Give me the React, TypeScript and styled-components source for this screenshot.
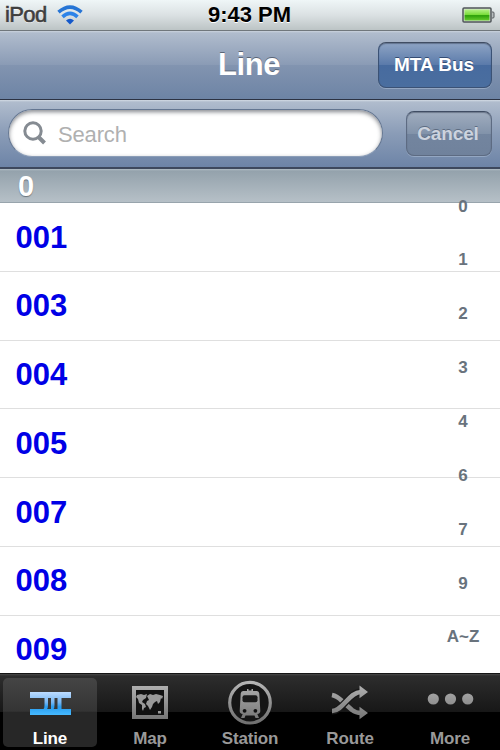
import React from "react";
import styled, { createGlobalStyle } from "styled-components";

const Global = createGlobalStyle`
  * { box-sizing: border-box; }
  body { margin: 0; background: #fff; font-family: "Liberation Sans", Arial, Helvetica, sans-serif; }
`;

const Screen = styled.div`
  width: 500px;
  height: 750px;
  overflow: hidden;
  display: flex;
  flex-direction: column;
  background: #fff;
`;

const StatusBar = styled.header`
  flex: 0 0 31px;
  display: grid;
  grid-template-columns: 1fr auto 1fr;
  align-items: center;
  padding: 0 5px 0 5px;
  background: linear-gradient(#eff6f7, #dbe1e3 50%, #bcc4c5);
  border-bottom: 1px solid #70777c;
`;
const Carrier = styled.div`
  display: flex;
  align-items: center;
  gap: 10px;
  font-size: 22px;
  letter-spacing: -0.6px;
  color: #3e3e3e;
  -webkit-text-stroke: 0.6px #3e3e3e;
  text-shadow: 0 1px 0 #fff;
`;
const Clock = styled.div`
  padding-right: 1px;
  font-size: 22px;
  font-weight: bold;
  color: #000;
  text-shadow: 0 1px 0 #fff;
`;
const BatterySlot = styled.div`
  display: flex;
  justify-content: flex-end;
`;

const NavBar = styled.nav`
  flex: 0 0 69px;
  display: grid;
  grid-template-columns: 1fr auto 1fr;
  align-items: center;
  padding: 0 8px;
  background: linear-gradient(#cbd3dd 0, #b0bccd 2px, #8a9bb5 50%, #8294b0 50%, #6d84a5);
  border-bottom: 1px solid #2c3343;
`;
const Title = styled.h1`
  grid-column: 2;
  margin: 0;
  padding: 0 2px 1px 0;
  font-size: 31px;
  line-height: 36px;
  letter-spacing: -0.4px;
  color: #fff;
  text-shadow: 0 -1px 0 #5a6576;
`;
const BarButton = styled.button<{ $width: number; $muted?: boolean }>`
  justify-self: end;
  width: ${(p) => p.$width}px;
  height: ${(p) => (p.$muted ? 45 : 46)}px;
  padding: ${(p) => (p.$muted ? "1px 2px 0 0" : "0 2px 0 0")};
  border: 1px solid ${(p) => (p.$muted ? "#5d6b82" : "#3b5275")};
  border-top-color: #404d63;
  border-radius: 8px;
  font: bold 19px "Liberation Sans", Arial, sans-serif;
  letter-spacing: ${(p) => (p.$muted ? "-0.15px" : "0")};
  white-space: nowrap;
  color: ${(p) => (p.$muted ? "#ccd3de" : "#fff")};
  text-shadow: 0 -1px 0 ${(p) => (p.$muted ? "#5d6c82" : "#344c73")};
  background: ${(p) =>
    p.$muted
      ? "linear-gradient(#a0adbf, #8293aa 50%, #73859f 50%, #70829c)"
      : "linear-gradient(#8ea4c4, #5a7aaa 50%, #476b9f 50%, #4a6e9f)"};
  box-shadow: 0 1px 0 #94a7c2, inset 0 1px 1px rgba(35, 45, 65, 0.4);
`;

const SearchBar = styled.section`
  flex: 0 0 69px;
  display: flex;
  align-items: center;
  justify-content: space-between;
  padding: 0 8px 1px;
  background: linear-gradient(#d3dbe4 0, #b0bccd 2px, #8a9cb7 50%, #6d84a7);
  border-bottom: 2px solid #3d485d;
`;
const SearchField = styled.label`
  width: 375px;
  height: 48px;
  display: flex;
  align-items: center;
  gap: 11px;
  padding-left: 14px;
  border: 1px solid #647691;
  border-bottom-color: #8b9db7;
  border-radius: 24px;
  background: #fff;
  box-shadow: inset 0 2px 4px rgba(50, 55, 65, 0.6);
`;
const SearchInput = styled.input`
  width: 300px;
  padding: 4px 0 0;
  border: 0;
  outline: 0;
  background: transparent;
  font: 22px "Liberation Sans", Arial, sans-serif;
  letter-spacing: -0.15px;
  &::placeholder { color: #b0b0b0; opacity: 1; }
`;

const ListArea = styled.main`
  flex: 0 0 504px;
  position: relative;
  overflow: hidden;
`;
const SectionHeader = styled.h2`
  height: 34px;
  margin: 0;
  padding-left: 18px;
  font-size: 29px;
  line-height: 34px;
  color: #fff;
  text-shadow: 0 1px 1px #67727a;
  background: linear-gradient(#b2bec6 0, #94a2ac 2px, #b6c0c7);
  border-bottom: 1px solid #98a4ac;
`;
const Lines = styled.ul`
  margin: 0;
  padding: 0;
  list-style: none;
`;
const LineRow = styled.li`
  height: 68.75px;
  padding: 1.5px 0 0 15.5px;
  display: flex;
  align-items: center;
  border-bottom: 1px solid #dfdfdf;
  font-size: 31px;
  font-weight: bold;
  color: #0000e6;
`;
const IndexRail = styled.aside`
  position: absolute;
  top: 10.6px;
  right: 7px;
  width: 60px;
  display: flex;
  flex-direction: column;
  font-size: 17px;
  font-weight: bold;
  text-align: center;
  color: #69737d;
`;
const IndexKey = styled.span`
  height: 53.85px;
  line-height: 54px;
`;

const TabBar = styled.footer`
  flex: 1;
  display: grid;
  grid-template-columns: repeat(5, 100px);
  padding-top: 4px;
  background: linear-gradient(#151515 0, #151515 1px, #484848 1px, #2d2d2d 3px, #171717 39px, #000 39px);
`;
const Tab = styled.a<{ $active?: boolean }>`
  width: 94px;
  height: 69px;
  margin: 1px 0 0 3px;
  border-radius: 5px;
  display: flex;
  flex-direction: column;
  align-items: center;
  background: ${(p) => (p.$active ? "linear-gradient(#454545, #343434 48%, #272727 50%, #272727)" : "transparent")};
  color: ${(p) => (p.$active ? "#fff" : "#999")};
  font-size: 17px;
  font-weight: bold;
`;
const TabIcon = styled.svg`
  width: 50px;
  height: 50px;
  flex: none;
  margin-top: -1px;
`;
const TabLabel = styled.span`
  line-height: 20px;
  padding-top: 2px;
  letter-spacing: -0.15px;
`;

const Wifi = () => (
  <svg width="26" height="20" viewBox="0 0 26 20">
    <g fill="none" stroke="#2775d5" strokeWidth="3.6">
      <path d="M1.5 7.2Q13-3 24.5 7.2" />
      <path d="M5.5 11.8Q13 5 20.5 11.8" stroke="#2d83e8" />
    </g>
    <path d="M9 15.4Q13 12 17 15.4L13 19.4Z" fill="#1458ca" />
  </svg>
);
const Battery = () => (
  <svg width="33" height="17" viewBox="0 0 33 17">
    <defs><linearGradient id="charge" x2="0" y2="1"><stop stopColor="#b5f386" /><stop offset=".48" stopColor="#78dc39" /><stop offset=".55" stopColor="#2da009" /><stop offset="1" stopColor="#65cd2c" /></linearGradient></defs>
    <path d="M30 5h1q1 0 1 1v4q0 1-1 1h-1" fill="#b8bec0" stroke="#565b5e" />
    <rect x="1" y="1" width="28" height="14" rx="1" fill="#d5ddd2" stroke="#50565a" strokeWidth="1.5" />
    <path d="M2.5 2.5h25v11h-25Z" fill="url(#charge)" />
  </svg>
);
const SearchIcon = () => (
  <svg width="24" height="26" viewBox="0 0 24 26" fill="none" stroke="#858b92">
    <circle cx="10" cy="11" r="8.2" strokeWidth="3" /><path d="m15.5 17 6 6" strokeWidth="4" />
  </svg>
);

const icons = {
  Line: (
    <path d="M5 15H46V21H36.5V32H46V38H5V32H18.5Q19.5 31 19.5 28V21H5ZM23 21V28Q23 31 22 32H26V21ZM29.5 21V28Q29.5 31 28.5 32H32.5V21Z" fill="url(#blue)" fillRule="evenodd" />
  ),
  Map: (
    <g>
      <path d="M9 11h32v29H9Z" fill="#111" stroke="url(#gray)" strokeWidth="4" />
      <path d="m12 18 4-1 3 1 3-1-1 4-3 2-1 2 3 2 1 3-2 1-1 3-1-2v-4l-3-2-1-4-2-2Zm10 1 3-2 3 1 3-1 4 1 3 1-1 3-1-1-1 4-2 2-1-3-2 1-2 2-1 3-2 3-2-4-2-2 1-3 2-1ZM33 34h3v2.5h-3Z" fill="#999" />
    </g>
  ),
  Station: (
    <g>
      <circle cx="25" cy="25.7" r="20.3" fill="#151515" stroke="url(#gray)" strokeWidth="3.2" />
      <path d="M18 14H22V12H23.5V13.5H26.5V12H28V14H32Q34 14 34.3 16.5L35.3 34Q35.3 36.5 32.3 37L34 41H30.5L29.5 38.5H20.5L19.5 41H16L17.7 37Q14.7 36.5 14.7 34L15.7 16.5Q16 14 18 14Z" fill="url(#gray)" />
      <rect x="17.5" y="18.3" width="15" height="7" rx="2" fill="#1b1b1b" />
      <circle cx="19.6" cy="33.8" r="1.9" fill="#111" /><circle cx="30.4" cy="33.8" r="1.9" fill="#111" />
    </g>
  ),
  Route: (
    <g fill="none" stroke="url(#gray)" strokeWidth="4.6">
      <path d="M7 18Q12 19 17 24L27 33Q31 36 36 36" />
      <path d="M7 34C18 34 24 15 36 15" stroke="#181818" strokeWidth="7" />
      <path d="M7 34C18 34 24 15 36 15" />
      <path d="m34.5 8.5 8.5 6.5-8.5 6.3Zm0 21.2 8.5 6.3-8.5 6.3Z" fill="url(#gray)" stroke="none" />
    </g>
  ),
  More: (
    <g fill="url(#gray)"><circle cx="8.3" cy="22" r="5.6" /><circle cx="25.5" cy="22" r="5.6" /><circle cx="42.7" cy="22" r="5.6" /></g>
  ),
};
type TabName = keyof typeof icons;
const tabs = Object.keys(icons) as TabName[];

export default function App() {
  return (
    <>
      <Global />
      <Screen>
        <StatusBar>
          <Carrier>iPod<Wifi /></Carrier><Clock>9:43 PM</Clock><BatterySlot><Battery /></BatterySlot>
        </StatusBar>
        <NavBar><Title>Line</Title><BarButton $width={114}>MTA Bus</BarButton></NavBar>
        <SearchBar>
          <SearchField><SearchIcon /><SearchInput placeholder="Search" /></SearchField>
          <BarButton $width={86} $muted>Cancel</BarButton>
        </SearchBar>
        <ListArea>
          <SectionHeader>0</SectionHeader>
          <Lines>{["001", "003", "004", "005", "007", "008", "009"].map((line) => <LineRow key={line}>{line}</LineRow>)}</Lines>
          <IndexRail>{["0", "1", "2", "3", "4", "6", "7", "9", "A~Z"].map((key) => <IndexKey key={key}>{key}</IndexKey>)}</IndexRail>
        </ListArea>
        <TabBar>
          {tabs.map((name) => (
            <Tab key={name} $active={name === "Line"}>
              <TabIcon viewBox="0 0 50 50">
                <defs>
                  <linearGradient id="gray" gradientUnits="userSpaceOnUse" x1="0" y1="5" x2="0" y2="45"><stop stopColor="#b5b5b5" /><stop offset="1" stopColor="#717171" /></linearGradient>
                  <linearGradient id="blue" x2="0" y2="1"><stop stopColor="#bddcff" /><stop offset=".45" stopColor="#75b6f3" /><stop offset=".65" stopColor="#289cef" /><stop offset="1" stopColor="#47baff" /></linearGradient>
                </defs>
                {icons[name]}
              </TabIcon>
              <TabLabel>{name}</TabLabel>
            </Tab>
          ))}
        </TabBar>
      </Screen>
    </>
  );
}
